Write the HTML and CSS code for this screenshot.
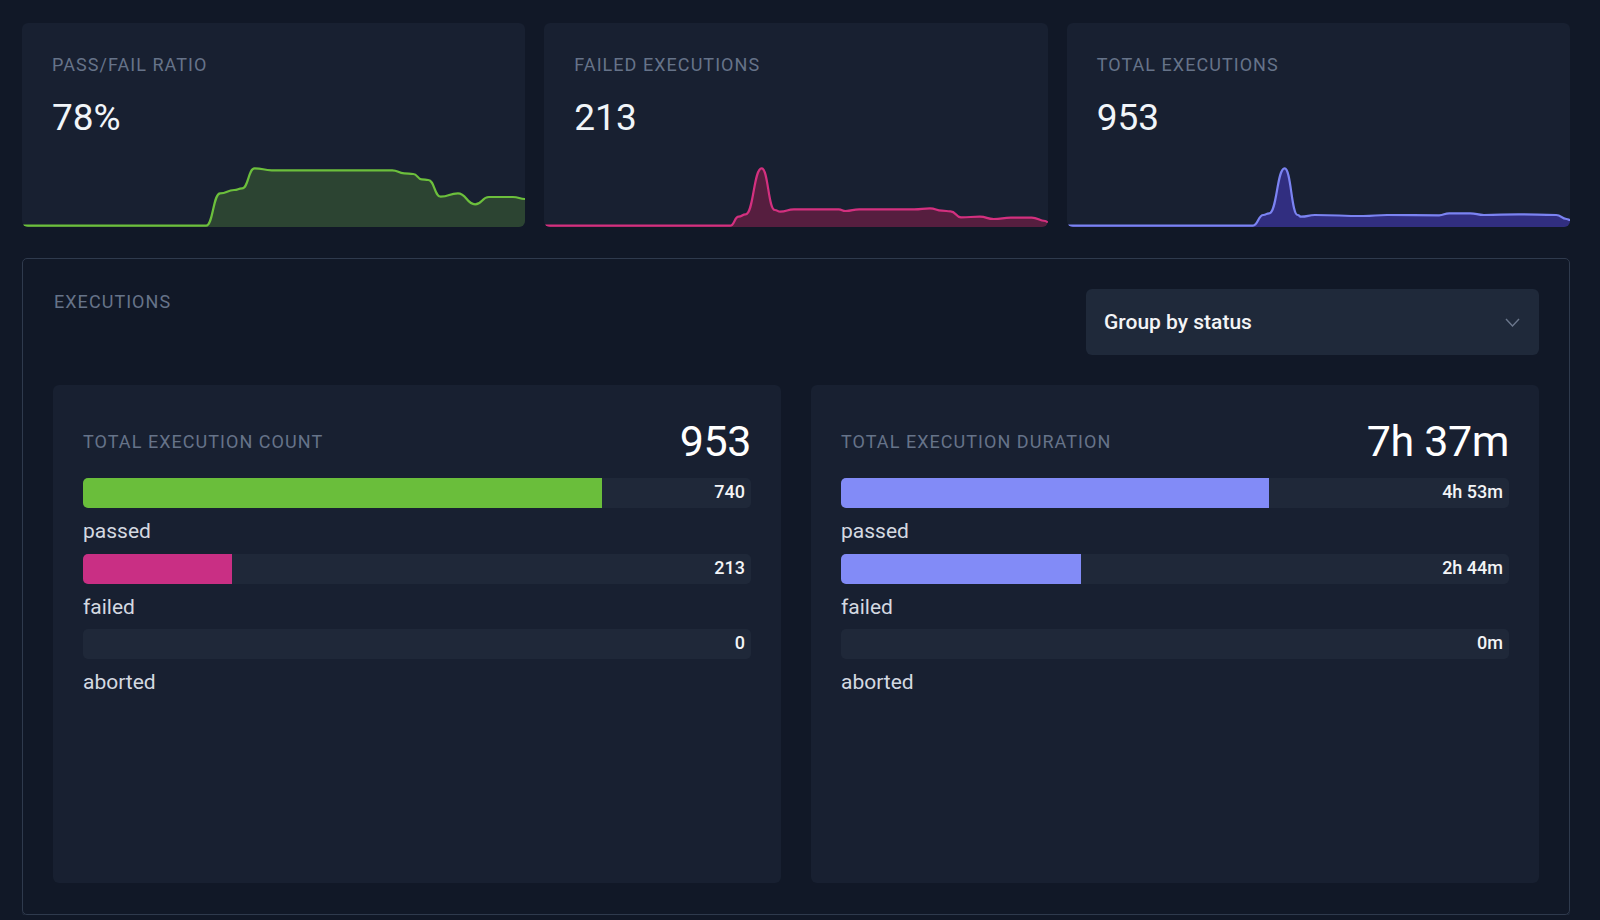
FILE: index.html
```html
<!DOCTYPE html>
<html lang="en">
<head>
<meta charset="utf-8">
<title>Executions</title>
<link rel="stylesheet" href="styles.css">
</head>
<body>
<div class="page">
  <div class="stats">
    <div class="stat-card">
      <div class="stat-label">PASS/FAIL RATIO</div>
      <div class="stat-value">78%</div>
      <svg class="spark" viewBox="0 0 503 62" preserveAspectRatio="none">
        <path class="area-green" d="M0,60.7 L184,60.7 C191,60.7 191,28.3 198,28.3 C205,28.3 205,25 212,25 C216,25 216,23.3 220,23.3 C226.2,23.3 226.2,3.3 232.4,3.3 C241,3.3 241,5.3 249.6,5.3 L370,5.3 C376,5.3 376,8.3 382,8.3 C386.5,8.3 386.5,9 391,9 C395.2,9 395.2,14.3 399.4,14.3 C402.7,14.3 402.7,15 406,15 C412.2,15 412.2,31.7 418.4,31.7 C427,31.7 427,28.3 435.6,28.3 C444.2,28.3 444.2,39.3 452.8,39.3 C459.7,39.3 459.7,32 466.6,32 L490.6,32 C496.8,32 496.8,34 503,34 L503,62 L0,62 Z"/>
        <path class="line-green" d="M0,60.7 L184,60.7 C191,60.7 191,28.3 198,28.3 C205,28.3 205,25 212,25 C216,25 216,23.3 220,23.3 C226.2,23.3 226.2,3.3 232.4,3.3 C241,3.3 241,5.3 249.6,5.3 L370,5.3 C376,5.3 376,8.3 382,8.3 C386.5,8.3 386.5,9 391,9 C395.2,9 395.2,14.3 399.4,14.3 C402.7,14.3 402.7,15 406,15 C412.2,15 412.2,31.7 418.4,31.7 C427,31.7 427,28.3 435.6,28.3 C444.2,28.3 444.2,39.3 452.8,39.3 C459.7,39.3 459.7,32 466.6,32 L490.6,32 C496.8,32 496.8,34 503,34"/>
      </svg>
    </div>
    <div class="stat-card">
      <div class="stat-label">FAILED EXECUTIONS</div>
      <div class="stat-value">213</div>
      <svg class="spark" viewBox="0 0 503 62" preserveAspectRatio="none">
        <path class="area-pink" d="M0,60.7 L186,60.7 C190.3,60.7 190.3,51.7 194.5,51.7 C198,51.7 198,49.3 201.5,49.3 C209.5,49.3 209.5,3.3 217.5,3.3 C224.1,3.3 224.1,45 230.7,45 C233.4,45 233.4,46.7 236,46.7 C242.9,46.7 242.9,44.3 249.7,44.3 L294.5,44.3 C297.9,44.3 297.9,46 301.3,46 C308.2,46 308.2,44.3 315,44.3 L370,44.3 C377.9,44.3 377.9,43.3 385.7,43.3 C391.7,43.3 391.7,45.7 397.7,45.7 C402,45.7 402,46.3 406.3,46.3 C411.5,46.3 411.5,52.3 416.7,52.3 C426.2,52.3 426.2,51.7 435.6,51.7 C442.5,51.7 442.5,54 449.4,54 C458,54 458,52.7 466.5,52.7 L487.3,52.7 C494.2,52.7 494.2,56 501,56 C502,56 502,57 503,57 L503,62 L0,62 Z"/>
        <path class="line-pink" d="M0,60.7 L186,60.7 C190.3,60.7 190.3,51.7 194.5,51.7 C198,51.7 198,49.3 201.5,49.3 C209.5,49.3 209.5,3.3 217.5,3.3 C224.1,3.3 224.1,45 230.7,45 C233.4,45 233.4,46.7 236,46.7 C242.9,46.7 242.9,44.3 249.7,44.3 L294.5,44.3 C297.9,44.3 297.9,46 301.3,46 C308.2,46 308.2,44.3 315,44.3 L370,44.3 C377.9,44.3 377.9,43.3 385.7,43.3 C391.7,43.3 391.7,45.7 397.7,45.7 C402,45.7 402,46.3 406.3,46.3 C411.5,46.3 411.5,52.3 416.7,52.3 C426.2,52.3 426.2,51.7 435.6,51.7 C442.5,51.7 442.5,54 449.4,54 C458,54 458,52.7 466.5,52.7 L487.3,52.7 C494.2,52.7 494.2,56 501,56 C502,56 502,57 503,57"/>
      </svg>
    </div>
    <div class="stat-card">
      <div class="stat-label">TOTAL EXECUTIONS</div>
      <div class="stat-value">953</div>
      <svg class="spark" viewBox="0 0 503 62" preserveAspectRatio="none">
        <path class="area-blue" d="M0,60.7 L185.8,60.7 C191,60.7 191,50 196.2,50 C199.1,50 199.1,48.3 202,48.3 C209.8,48.3 209.8,3.3 217.5,3.3 C224.1,3.3 224.1,50 230.6,50 C232.3,50 232.3,51.7 234,51.7 C240.9,51.7 240.9,50 247.8,50 C271.9,50 271.9,51 296,51 C308,51 308,50 320,50 C345.9,50 345.9,50.3 371.8,50.3 C376.9,50.3 376.9,48.3 382,48.3 L402.8,48.3 C409.7,48.3 409.7,50 416.6,50 C433.8,50 433.8,49.3 451,49.3 C470,49.3 470,50 488.9,50 C494,50 494,54 499.2,54 C501.1,54 501.1,55 503,55 L503,62 L0,62 Z"/>
        <path class="line-blue" d="M0,60.7 L185.8,60.7 C191,60.7 191,50 196.2,50 C199.1,50 199.1,48.3 202,48.3 C209.8,48.3 209.8,3.3 217.5,3.3 C224.1,3.3 224.1,50 230.6,50 C232.3,50 232.3,51.7 234,51.7 C240.9,51.7 240.9,50 247.8,50 C271.9,50 271.9,51 296,51 C308,51 308,50 320,50 C345.9,50 345.9,50.3 371.8,50.3 C376.9,50.3 376.9,48.3 382,48.3 L402.8,48.3 C409.7,48.3 409.7,50 416.6,50 C433.8,50 433.8,49.3 451,49.3 C470,49.3 470,50 488.9,50 C494,50 494,54 499.2,54 C501.1,54 501.1,55 503,55"/>
      </svg>
    </div>
  </div>

  <section class="panel">
    <div class="panel-head">
      <div class="panel-title">EXECUTIONS</div>
      <div class="select">
        <span class="select-text">Group by status</span>
        <svg class="chevron" viewBox="0 0 15 9"><path d="M1 1 L7.5 8 L14 1"/></svg>
      </div>
    </div>
    <div class="breakdown">
      <div class="bd-card">
        <div class="bd-head">
          <span class="bd-label">TOTAL EXECUTION COUNT</span>
          <span class="bd-total">953</span>
        </div>
        <div class="bar-row">
          <div class="bar"><div class="fill fill-green" style="width:77.65%"></div><span class="bar-val">740</span></div>
          <div class="bar-label">passed</div>
        </div>
        <div class="bar-row">
          <div class="bar"><div class="fill fill-pink" style="width:22.35%"></div><span class="bar-val">213</span></div>
          <div class="bar-label">failed</div>
        </div>
        <div class="bar-row">
          <div class="bar"><div class="fill fill-pink" style="width:0%"></div><span class="bar-val">0</span></div>
          <div class="bar-label">aborted</div>
        </div>
      </div>
      <div class="bd-card">
        <div class="bd-head">
          <span class="bd-label">TOTAL EXECUTION DURATION</span>
          <span class="bd-total">7h 37m</span>
        </div>
        <div class="bar-row">
          <div class="bar"><div class="fill fill-blue" style="width:64.1%"></div><span class="bar-val">4h 53m</span></div>
          <div class="bar-label">passed</div>
        </div>
        <div class="bar-row">
          <div class="bar"><div class="fill fill-blue" style="width:35.9%"></div><span class="bar-val">2h 44m</span></div>
          <div class="bar-label">failed</div>
        </div>
        <div class="bar-row">
          <div class="bar"><div class="fill fill-blue" style="width:0%"></div><span class="bar-val">0m</span></div>
          <div class="bar-label">aborted</div>
        </div>
      </div>
    </div>
  </section>
</div>
</body>
</html>
```

FILE: styles.css
```css
* { box-sizing: border-box; }

html, body {
  margin: 0;
  background: #111827;
}

body {
  font-family: Roboto, "Liberation Sans", sans-serif;
  color: #f1f5f9;
}

.page {
  padding: 23px 30px 0 22px;
}

.stats {
  display: grid;
  grid-template-columns: repeat(3, 1fr);
  gap: 19px;
}

.stat-card {
  height: 204px;
  background: #182031;
  border-radius: 6px;
  overflow: hidden;
  display: flex;
  flex-direction: column;
  padding-top: 31px;
}

.stat-label {
  padding-left: 30px;
  font-size: 18px;
  line-height: 21px;
  letter-spacing: 1.05px;
  color: #667389;
}

.stat-value {
  padding-left: 30px;
  margin-top: 21px;
  font-size: 37px;
  line-height: 44px;
  color: #f1f5f9;
}

.spark {
  display: block;
  margin-top: auto;
  width: 100%;
  height: 62px;
}

.spark path { vector-effect: non-scaling-stroke; }

.line-green, .line-pink, .line-blue {
  fill: none;
  stroke-width: 2.2;
  stroke-linejoin: round;
  stroke-linecap: round;
}

.line-green { stroke: #6cbf3c; }
.area-green { fill: #2c4432; }
.line-pink { stroke: #d3307f; }
.area-pink { fill: #561e3f; }
.line-blue { stroke: #7b83f2; }
.area-blue { fill: #312e80; }

.panel {
  margin-top: 31px;
  border: 1px solid #2f3a4d;
  border-radius: 5px;
  box-shadow: 0 2px 0 #1e2738;
  padding: 30px 30px 31px 30px;
}

.panel-head {
  display: flex;
  justify-content: space-between;
  align-items: flex-start;
}

.panel-title {
  margin: 2px 0 0 1px;
  font-size: 18px;
  line-height: 21px;
  letter-spacing: 1.05px;
  color: #667389;
}

.select {
  width: 453px;
  height: 66px;
  background: #1f293a;
  border-radius: 6px;
  display: flex;
  align-items: center;
  justify-content: space-between;
  padding: 0 19px 0 18px;
}

.select-text {
  font-size: 21px;
  font-weight: 500;
  color: #f3f4f6;
}

.chevron {
  width: 15px;
  height: 9px;
  fill: none;
  stroke: #6b778c;
  stroke-width: 1.4;
}

.breakdown {
  margin-top: 30px;
  display: grid;
  grid-template-columns: 1fr 1fr;
  gap: 30px;
}

.bd-card {
  min-height: 498px;
  background: #182031;
  border-radius: 6px;
  padding: 30px;
}

.bd-head {
  display: flex;
  justify-content: space-between;
  align-items: center;
  margin-bottom: 11px;
}

.bd-label {
  font-size: 18px;
  line-height: 21px;
  letter-spacing: 1.05px;
  color: #667389;
}

.bd-total {
  font-size: 43px;
  line-height: 52px;
  letter-spacing: -0.4px;
  color: #ffffff;
}

.bar {
  display: grid;
  height: 30px;
  background: #1f2839;
  border-radius: 5px;
  overflow: hidden;
}

.fill, .bar-val {
  grid-area: 1 / 1;
}

.fill {
  height: 100%;
}

.fill-green { background: #6abe3b; }
.fill-pink { background: #c92f84; }
.fill-blue { background: #828bf7; }

.bar-val {
  justify-self: end;
  align-self: center;
  padding: 0 6px 3px 0;
  font-size: 18px;
  line-height: 21px;
  font-weight: 500;
  color: #f3f4f6;
}

.bar-label {
  padding: 11px 0 10.5px;
  font-size: 21px;
  line-height: 24px;
  color: #d4d9e1;
}
```
